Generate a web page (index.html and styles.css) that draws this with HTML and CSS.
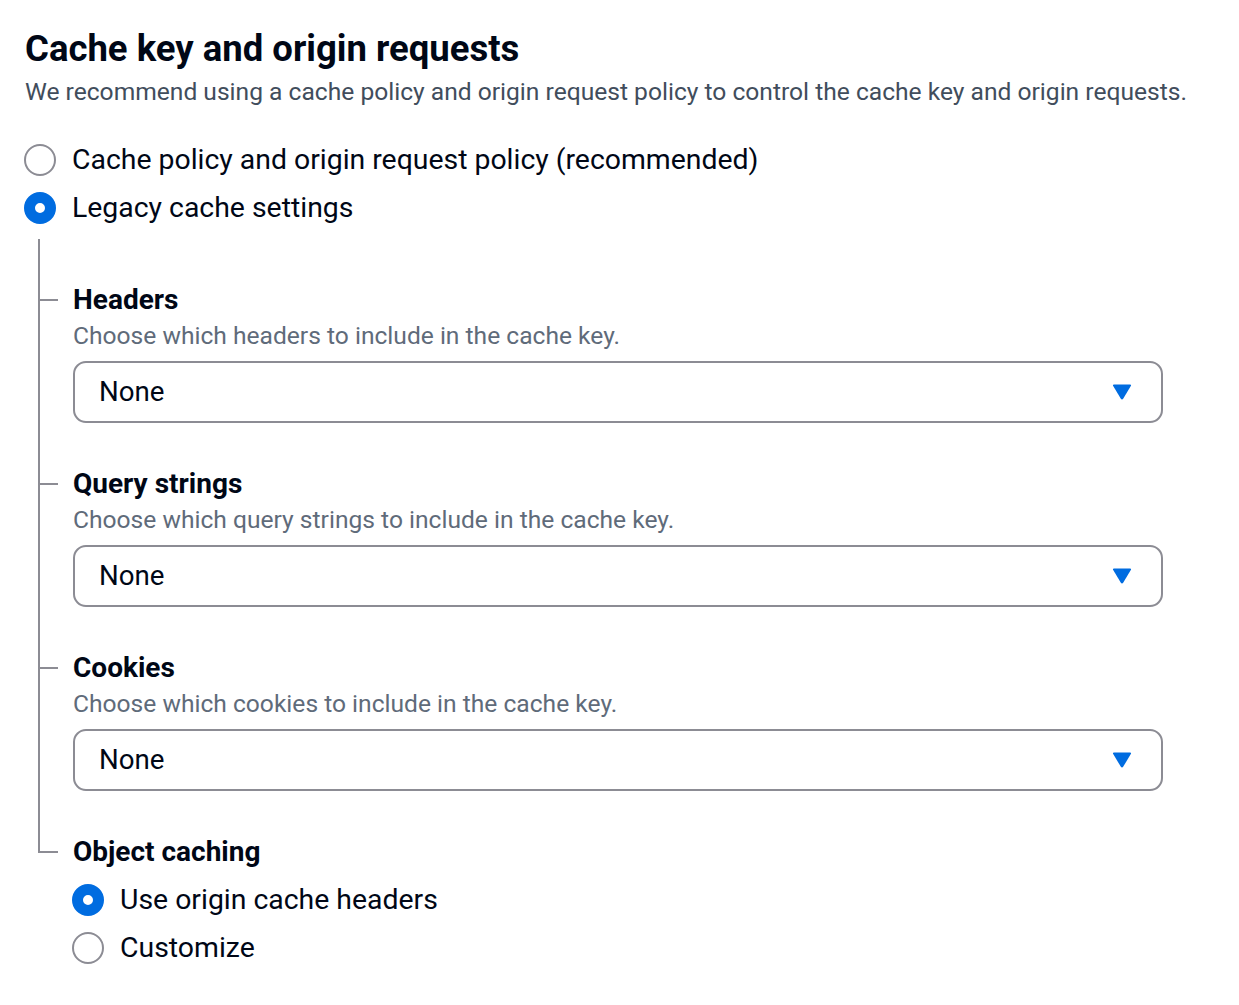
FILE: index.html
```html
<!DOCTYPE html>
<html lang="en">
<head>
<meta charset="utf-8">
<title>Cache key and origin requests</title>
<link rel="stylesheet" href="styles.css">
</head>
<body>
<main class="page">
  <h1 class="title">Cache key and origin requests</h1>
  <p class="intro">We recommend using a cache policy and origin request policy to control the cache key and origin requests.</p>

  <div class="radio-group">
    <label class="radio-row">
      <span class="radio"></span>
      <span class="radio-label">Cache policy and origin request policy (recommended)</span>
    </label>
    <label class="radio-row">
      <span class="radio radio-checked"></span>
      <span class="radio-label">Legacy cache settings</span>
    </label>
  </div>

  <div class="tree">
    <section class="node node-first">
      <div class="field-label">Headers</div>
      <div class="field-desc">Choose which headers to include in the cache key.</div>
      <div class="select">
        <span class="select-value">None</span>
        <svg class="caret" viewBox="0 0 20 16" width="20" height="16" aria-hidden="true"><path d="M2 0.5 H18 Q19.6 0.5 18.8 2 L11.3 14.6 Q10 16.3 8.7 14.6 L1.2 2 Q0.4 0.5 2 0.5 Z"/></svg>
      </div>
    </section>

    <section class="node">
      <div class="field-label">Query strings</div>
      <div class="field-desc">Choose which query strings to include in the cache key.</div>
      <div class="select">
        <span class="select-value">None</span>
        <svg class="caret" viewBox="0 0 20 16" width="20" height="16" aria-hidden="true"><path d="M2 0.5 H18 Q19.6 0.5 18.8 2 L11.3 14.6 Q10 16.3 8.7 14.6 L1.2 2 Q0.4 0.5 2 0.5 Z"/></svg>
      </div>
    </section>

    <section class="node">
      <div class="field-label">Cookies</div>
      <div class="field-desc">Choose which cookies to include in the cache key.</div>
      <div class="select">
        <span class="select-value">None</span>
        <svg class="caret" viewBox="0 0 20 16" width="20" height="16" aria-hidden="true"><path d="M2 0.5 H18 Q19.6 0.5 18.8 2 L11.3 14.6 Q10 16.3 8.7 14.6 L1.2 2 Q0.4 0.5 2 0.5 Z"/></svg>
      </div>
    </section>

    <section class="node node-last">
      <div class="field-label field-label-tall">Object caching</div>
      <div class="radio-group">
        <label class="radio-row">
          <span class="radio radio-checked"></span>
          <span class="radio-label">Use origin cache headers</span>
        </label>
        <label class="radio-row">
          <span class="radio"></span>
          <span class="radio-label">Customize</span>
        </label>
      </div>
    </section>
  </div>
</main>
</body>
</html>
```

FILE: styles.css
```css
* {
  box-sizing: border-box;
}

html, body {
  margin: 0;
  padding: 0;
  background: #ffffff;
}

.page {
  padding: 27px 0 0 25px;
  font-family: Roboto, "Liberation Sans", sans-serif;
  color: #000716;
  width: 1239px;
}

.title {
  margin: 0;
  font-size: 36.5px;
  line-height: 44px;
  font-weight: 700;
  letter-spacing: 0;
}

.intro {
  margin: 6px 0 0 0;
  font-size: 24.6px;
  line-height: 30px;
  color: #414d5c;
  white-space: nowrap;
}

.radio-group {
  display: flex;
  flex-direction: column;
}

.page > .radio-group {
  margin-top: 29px;
  margin-left: -1px;
}

.radio-row {
  display: flex;
  align-items: center;
  gap: 16px;
  height: 48px;
}

.radio {
  flex: none;
  width: 32px;
  height: 32px;
  border-radius: 50%;
  border: 2px solid #8c8c94;
  background: #ffffff;
}

.radio-checked {
  border: 11px solid #006ce0;
}

.radio-label {
  font-size: 28.4px;
  line-height: 32px;
  color: #000716;
}

.tree {
  margin-left: 13px;
  margin-top: 7px;
}

.node {
  position: relative;
  padding: 45px 0 0 35px;
}

.node::before {
  content: "";
  position: absolute;
  left: 0;
  top: 0;
  bottom: 0;
  width: 2px;
  background: #8c8c94;
}

.node::after {
  content: "";
  position: absolute;
  left: 0;
  top: 60px;
  width: 20px;
  height: 2px;
  background: #8c8c94;
}

.node-last {
  padding-top: 37px;
}

.node-last::before {
  bottom: auto;
  height: 62px;
}

.node-last .radio-group {
  margin-left: -1px;
}

.field-label {
  font-size: 28px;
  line-height: 32px;
  font-weight: 700;
}

.field-label-tall {
  line-height: 48px;
}

.field-desc {
  margin-top: 5px;
  font-size: 24.6px;
  line-height: 30px;
  color: #5f6b7a;
  white-space: nowrap;
}

.select {
  margin-top: 10px;
  width: 1090px;
  height: 62px;
  border: 2px solid #8c8c94;
  border-radius: 13px;
  display: flex;
  align-items: center;
  justify-content: space-between;
  padding: 0 29px 0 24px;
}

.select-value {
  font-size: 27.7px;
  line-height: 32px;
  color: #000716;
}

.caret {
  fill: #006ce0;
  display: block;
}
```
